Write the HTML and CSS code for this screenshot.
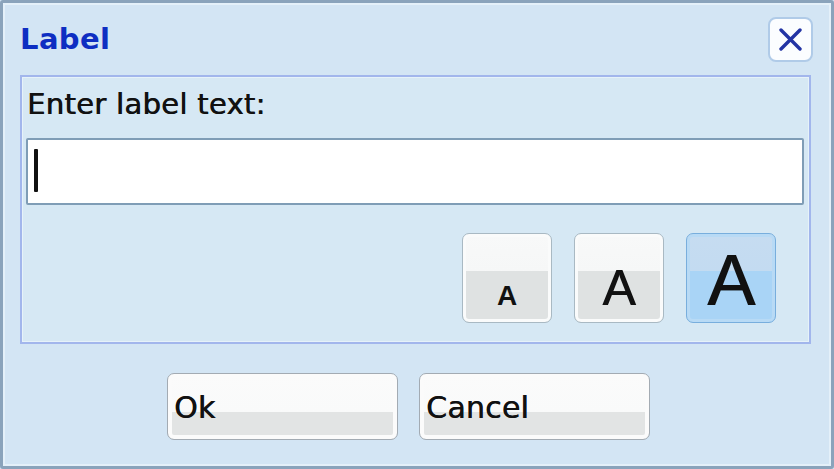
FILE: index.html
```html
<!DOCTYPE html>
<html>
<head>
<meta charset="utf-8">
<link rel="stylesheet" href="styles.css">
</head>
<body>
<div class="window">
  <div class="header">
    <div class="title">Label</div>
    <div class="close">
      <svg width="23" height="23" viewBox="0 0 23 23"><path d="M2 2 L21 21 M21 2 L2 21" stroke="#2334a4" stroke-width="3.4" stroke-linecap="round" fill="none"/></svg>
    </div>
  </div>
  <div class="panel">
    <div class="prompt">Enter label text:</div>
    <div class="text-input"><span class="caret"></span></div>
    <div class="sizes">
      <div class="size-btn"><span class="glyph small">A</span></div>
      <div class="size-btn"><span class="glyph medium">A</span></div>
      <div class="size-btn active"><span class="glyph large">A</span></div>
    </div>
  </div>
  <div class="footer">
    <div class="btn">Ok</div>
    <div class="btn">Cancel</div>
  </div>
</div>
</body>
</html>
```

FILE: styles.css
```css
html, body {
  margin: 0;
  padding: 0;
  background: #d3e5f4;
}

.window {
  box-sizing: border-box;
  width: 834px;
  height: 469px;
  border: 3px solid #8aa3bb;
  border-radius: 3px;
  box-shadow: inset 0 0 0 2px #e4f0f9;
  background: #d3e5f4;
  font-family: "DejaVu Sans", Verdana, sans-serif;
  display: flex;
  flex-direction: column;
}

.header {
  display: flex;
  justify-content: space-between;
  align-items: flex-start;
  height: 72px;
  padding: 0 18px 0 17px;
}

.title {
  margin-top: 19px;
  font-size: 29px;
  line-height: 34px;
  font-weight: bold;
  letter-spacing: 0.4px;
  color: #0e2ec2;
}

.close {
  box-sizing: border-box;
  margin-top: 14px;
  width: 45px;
  height: 45px;
  border: 2px solid #b0cbe8;
  border-radius: 8px;
  background: #fbfdff;
  display: flex;
  align-items: center;
  justify-content: center;
}

.panel {
  box-sizing: border-box;
  margin: 0 20px 0 17px;
  height: 269px;
  border: 2px solid #a2b6ec;
  box-shadow: inset 0 0 0 1px #e6f2f9;
  background: #d6e8f4;
  padding: 10px 5px 0 4px;
}

.prompt {
  font-size: 29px;
  line-height: 34px;
  letter-spacing: 0.3px;
  color: #111;
  padding-left: 1px;
  text-shadow: 0.6px 0 0 #111;
}

.text-input {
  box-sizing: border-box;
  margin-top: 17px;
  height: 67px;
  border: 2px solid #7f9db6;
  border-radius: 2px;
  background: #fff;
  padding: 9px 0 0 6px;
}

.caret {
  display: block;
  width: 4px;
  height: 43px;
  border-radius: 1px;
  background: #111;
}

.sizes {
  display: flex;
  justify-content: flex-end;
  gap: 22px;
  margin-top: 28px;
  padding-right: 28px;
}

.size-btn {
  box-sizing: border-box;
  width: 90px;
  height: 90px;
  border: 1px solid #a9b9c3;
  border-radius: 7px;
  background: linear-gradient(#f8f9f9 0, #f6f7f7 42%, #dfe2e2 42%, #dfe2e2 100%);
  box-shadow: inset 0 0 0 3px #fafbfb;
  display: flex;
  justify-content: center;
  align-items: flex-end;
}

.size-btn.active {
  border-color: #78aedd;
  background: linear-gradient(#c6dcf1 0, #c3dbf1 42%, #a9d4f6 42%, #a9d4f6 100%);
  box-shadow: inset 0 0 0 3px #b8daf5;
}

.glyph {
  font-family: "Liberation Sans", Arial, sans-serif;
  line-height: 1;
  color: #111;
}

.glyph.small {
  font-size: 28px;
  font-weight: bold;
  padding-bottom: 12px;
}

.glyph.medium {
  font-size: 50px;
  padding-bottom: 9px;
  text-shadow: 0.8px 0 0 #111;
}

.glyph.large {
  font-size: 72px;
  padding-bottom: 6px;
  text-shadow: 1px 0 0 #111;
}

.footer {
  display: flex;
  gap: 21px;
  margin-top: 29px;
  padding-left: 164px;
}

.btn {
  box-sizing: border-box;
  width: 231px;
  height: 67px;
  border: 1px solid #a3abb3;
  border-radius: 7px;
  background: linear-gradient(#fbfbfb 0, #f9fafa 58%, #e2e4e4 58%, #e2e4e4 100%);
  box-shadow: inset 0 0 0 4px #fbfbfb;
  display: flex;
  align-items: center;
  padding: 2px 0 0 6px;
  font-size: 30px;
  line-height: 34px;
  letter-spacing: 0.2px;
  color: #111;
  text-shadow: 0.6px 0 0 #111;
}
```
